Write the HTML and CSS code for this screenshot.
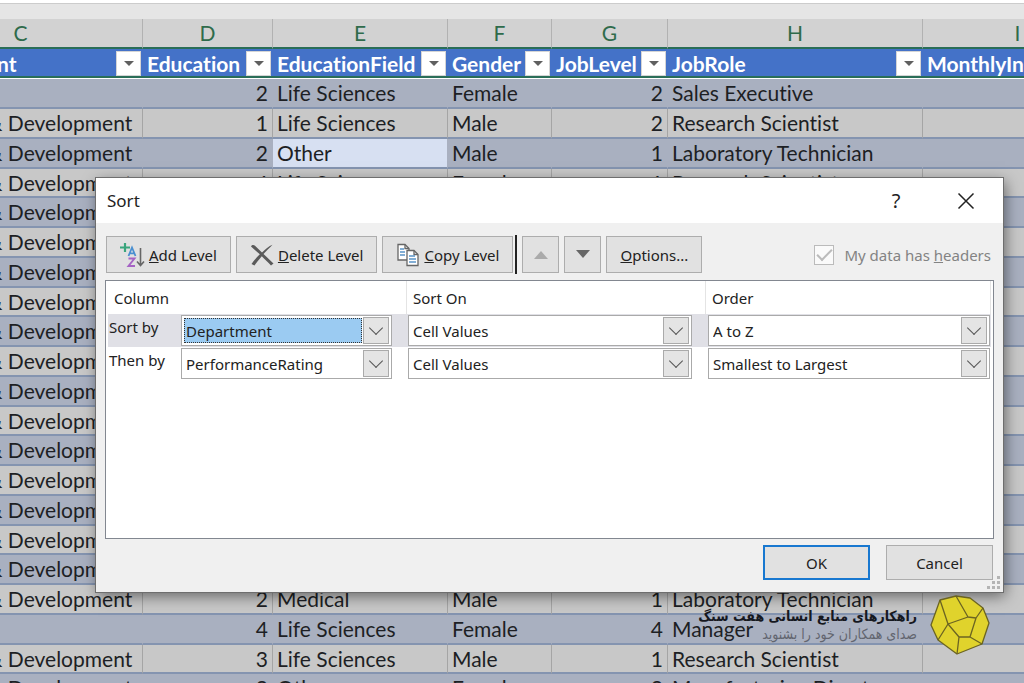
FILE: index.html
```html
<!DOCTYPE html>
<html lang="en">
<head>
<meta charset="utf-8">
<meta name="viewport" content="width=device-width, initial-scale=1">
<title>Sort</title>
<link rel="stylesheet" href="styles.css">
</head>
<body>
<main class="app">
  <div class="formula-strip"></div>
  <table class="sheet">
    <colgroup>
      <col class="col-c"><col class="col-d"><col class="col-e"><col class="col-f"><col class="col-g"><col class="col-h"><col class="col-i">
    </colgroup>
    <thead>
      <tr class="letters"><th>C</th><th>D</th><th>E</th><th>F</th><th>G</th><th>H</th><th>I</th></tr>
      <tr class="fields">
        <th><div class="field">Department<button class="filter" aria-label="Filter Department"></button></div></th>
        <th><div class="field">Education<button class="filter" aria-label="Filter Education"></button></div></th>
        <th><div class="field">EducationField<button class="filter" aria-label="Filter EducationField"></button></div></th>
        <th><div class="field">Gender<button class="filter" aria-label="Filter Gender"></button></div></th>
        <th><div class="field">JobLevel<button class="filter" aria-label="Filter JobLevel"></button></div></th>
        <th><div class="field">JobRole<button class="filter" aria-label="Filter JobRole"></button></div></th>
        <th><div class="field">MonthlyIncome<button class="filter" aria-label="Filter MonthlyIncome"></button></div></th>
      </tr>
    </thead>
    <tbody>
      <tr><td>Sales</td><td class="num">2</td><td>Life Sciences</td><td>Female</td><td class="num">2</td><td>Sales Executive</td><td></td></tr>
      <tr><td>Research &amp; Development</td><td class="num">1</td><td>Life Sciences</td><td>Male</td><td class="num">2</td><td>Research Scientist</td><td></td></tr>
      <tr><td>Research &amp; Development</td><td class="num">2</td><td class="active">Other</td><td>Male</td><td class="num">1</td><td>Laboratory Technician</td><td></td></tr>
      <tr><td>Research &amp; Development</td><td class="num">4</td><td>Life Sciences</td><td>Female</td><td class="num">1</td><td>Research Scientist</td><td></td></tr>
      <tr><td>Research &amp; Development</td><td></td><td></td><td></td><td></td><td></td><td></td></tr>
      <tr><td>Research &amp; Development</td><td></td><td></td><td></td><td></td><td></td><td></td></tr>
      <tr><td>Research &amp; Development</td><td></td><td></td><td></td><td></td><td></td><td></td></tr>
      <tr><td>Research &amp; Development</td><td></td><td></td><td></td><td></td><td></td><td></td></tr>
      <tr><td>Research &amp; Development</td><td></td><td></td><td></td><td></td><td></td><td></td></tr>
      <tr><td>Research &amp; Development</td><td></td><td></td><td></td><td></td><td></td><td></td></tr>
      <tr><td>Research &amp; Development</td><td></td><td></td><td></td><td></td><td></td><td></td></tr>
      <tr><td>Research &amp; Development</td><td></td><td></td><td></td><td></td><td></td><td></td></tr>
      <tr><td>Research &amp; Development</td><td></td><td></td><td></td><td></td><td></td><td></td></tr>
      <tr><td>Research &amp; Development</td><td></td><td></td><td></td><td></td><td></td><td></td></tr>
      <tr><td>Research &amp; Development</td><td></td><td></td><td></td><td></td><td></td><td></td></tr>
      <tr><td>Research &amp; Development</td><td></td><td></td><td></td><td></td><td></td><td></td></tr>
      <tr><td>Research &amp; Development</td><td></td><td></td><td></td><td></td><td></td><td></td></tr>
      <tr><td>Research &amp; Development</td><td class="num">2</td><td>Medical</td><td>Male</td><td class="num">1</td><td>Laboratory Technician</td><td></td></tr>
      <tr><td>Sales</td><td class="num">4</td><td>Life Sciences</td><td>Female</td><td class="num">4</td><td>Manager</td><td></td></tr>
      <tr><td>Research &amp; Development</td><td class="num">3</td><td>Life Sciences</td><td>Male</td><td class="num">1</td><td>Research Scientist</td><td></td></tr>
      <tr><td>Research &amp; Development</td><td class="num">2</td><td>Other</td><td>Female</td><td class="num">3</td><td>Manufacturing Director</td><td></td></tr>
    </tbody>
  </table>

  <section class="dialog" role="dialog" aria-labelledby="dialog-title">
    <header class="titlebar">
      <h1 class="title" id="dialog-title">Sort</h1>
      <button class="title-btn" aria-label="Help">?</button>
      <button class="title-btn" aria-label="Close"><svg width="18" height="18" viewBox="0 0 18 18" fill="none" stroke="#222" stroke-width="1.5"><path d="M1.5 1.5l15 15M16.5 1.5l-15 15"/></svg></button>
    </header>
    <div class="toolbar">
      <button class="btn">
        <svg width="25" height="26" viewBox="0 0 25 26" fill="none">
          <path d="M5 1v9M0 5.500h10" stroke="#3aa57c" stroke-width="2.2"/>
          <path d="M8.500 14l3.500-8.500 3.500 8.500M9.800 11.300h4.500" stroke="#4a8fd0" stroke-width="1.800"/>
          <path d="M8.500 16.500h6l-6 7.500h6.500" stroke="#a563c4" stroke-width="1.900"/>
          <path d="M20.500 6v17M17 19.500l3.500 4 3.500-4" stroke="#666" stroke-width="1.600"/>
        </svg><span><u>A</u>dd Level</span></button>
      <button class="btn">
        <svg width="24" height="24" viewBox="0 0 24 24"><path d="M1 3.500C2 1.500 4 1.800 5 2.800l7 6.700C15 6.500 19 3 22.500 1.800 20 4.500 16 8 13.500 11c3 2.800 7 6.500 10 9.500l-2.500 2C18 19 14.500 16 11.800 13.200 9 16.500 6.500 19.500 4.500 22.500L1.500 21c2.500-3.500 5.500-7 8.300-9.800z" fill="#5a5a5a"/></svg>
        <span><u>D</u>elete Level</span></button>
      <button class="btn">
        <svg width="24" height="24" viewBox="0 0 24 24" stroke-width="1.300">
          <path d="M2 1.500h7l4 4V17H2z" fill="#fff" stroke="#666"/><path d="M9 1.500v4h4" fill="none" stroke="#666"/>
          <path d="M4 6h4M4 9h5M4 12h5" stroke="#5a94c8"/>
          <path d="M11 7.500h7l4 4v11H11z" fill="#fff" stroke="#666"/><path d="M18 7.500v4h4" fill="none" stroke="#666"/>
          <path d="M13 13h6M13 16h7M13 19h7" stroke="#5a94c8"/>
        </svg><span><u>C</u>opy Level</span></button>
      <span class="divider"></span>
      <button class="btn move" disabled aria-label="Move up"><svg width="16" height="9" viewBox="0 0 16 9"><path d="M1 9l7-8 7 8z" fill="#aaa"/></svg></button>
      <button class="btn move" aria-label="Move down"><svg width="16" height="9" viewBox="0 0 16 9"><path d="M1 0h14L8 8z" fill="#666"/></svg></button>
      <button class="btn"><span><u>O</u>ptions...</span></button>
      <label class="headers"><input class="tick" type="checkbox" checked disabled><span>My data has <u>h</u>eaders</span></label>
    </div>
    <div class="levels">
      <div class="level heads"><span class="head">Column</span><span class="head">Sort On</span><span class="head">Order</span></div>
      <div class="level selected">
        <label class="level-name" for="col1">Sort by</label>
        <div class="combo"><select class="pick focused" id="col1"><option>Department</option></select><span class="arrow"></span></div>
        <div class="combo"><select class="pick" aria-label="Sort on, first level"><option>Cell Values</option></select><span class="arrow"></span></div>
        <div class="combo"><select class="pick" aria-label="Order, first level"><option>A to Z</option></select><span class="arrow"></span></div>
      </div>
      <div class="level">
        <label class="level-name" for="col2">Then by</label>
        <div class="combo"><select class="pick" id="col2"><option>PerformanceRating</option></select><span class="arrow"></span></div>
        <div class="combo"><select class="pick" aria-label="Sort on, second level"><option>Cell Values</option></select><span class="arrow"></span></div>
        <div class="combo"><select class="pick" aria-label="Order, second level"><option>Smallest to Largest</option></select><span class="arrow"></span></div>
      </div>
    </div>
    <footer class="actions">
      <button class="btn action default">OK</button>
      <button class="btn action">Cancel</button>
    </footer>
    <svg class="grip" width="14" height="14" viewBox="0 0 14 14" fill="#b4b4b4"><path d="M10 0h3v3h-3zM5 5h3v3H5zM10 5h3v3h-3zM0 10h3v3H0zM5 10h3v3H5zM10 10h3v3h-3z"/></svg>
  </section>

  <aside class="brand">
    <div class="brand-text" lang="fa" dir="rtl">
      <p class="brand-name">راهکارهای منابع انسانی هفت سنگ</p>
      <p class="brand-line">صدای همکاران خود را بشنوید</p>
    </div>
    <svg width="60" height="60" viewBox="0 0 60 60" fill="none" stroke="#6b6422" stroke-width="1.300" stroke-linejoin="round">
      <path d="M26 1L10 5 1 30l7 15 19 14 25-10 7-21-6-15L40 3z" fill="#e0d32c"/>
      <path d="M26 1l12 21-20 7-8-24M38 22l8 1 7-10M18 29L8 45M18 29l11 13-2 17M29 42h11l6-19M40 42l12 7"/>
    </svg>
  </aside>
</main>
</body>
</html>
```
FILE: styles.css
```css
* { box-sizing: border-box; }
body { margin: 0; font-family: "Noto Sans", "Open Sans", sans-serif; font-size: 15px; color: #222; }
button, select, input { font: inherit; color: inherit; }
.app { position: relative; height: 100vh; overflow: hidden; background: #c9c9c9; }

.formula-strip { height: 19px; border-top: 3px solid #fff; background: #e5e5e5; box-shadow: inset 0 1px #ccc; }
.sheet { width: 1214px; margin-left: -101px; table-layout: fixed; border-collapse: separate; border-spacing: 0; font-family: Lato, sans-serif; font-size: 21px; line-height: 24px; font-variant-ligatures: none; }
.col-c { width: 244px; }
.col-d { width: 130px; }
.col-e { width: 175px; }
.col-f { width: 104px; }
.col-g { width: 116px; }
.col-h { width: 255px; }
.col-i { width: 190px; }
.sheet th, .sheet td { padding: 0 4px; text-align: left; white-space: nowrap; }
.letters th { height: 30px; text-align: center; font-weight: 400; color: #2f6b4b; background: #d2d2d2; border-right: 1px solid #b2b2b2; border-bottom: 2px solid #2a6e58; }
.sheet .fields th { height: 30px; padding: 0 2px 0 4px; color: #fff; background: #4472c8; border-bottom: 1px solid #fff; box-shadow: inset 0 -2px #2a6e58; }
.field { display: flex; align-items: center; justify-content: space-between; height: 28px; }
.filter { display: grid; place-items: center; width: 25px; height: 25px; flex: none; padding: 0; border: 1px solid #d5d5d5; background: #fff; }
.filter::before { content: ""; border: 5px solid transparent; border-top-color: #606060; border-bottom: 0; }
.sheet td { height: 30px; color: #1d1f24; border-bottom: 2px solid #8494b0; border-right: 1px solid #a5a5a5; background: #c8c8c8; }
.sheet tr:nth-child(odd) td { background: #a9b0c0; border-right-color: #a9b0c0; }
.sheet tr:nth-child(4n) td { height: 29px; }
.sheet td:first-child { padding-left: 0; }
.sheet .num { text-align: right; }
.sheet tr:nth-child(odd) .active { background: #d7e0f2; }

.dialog { position: absolute; top: 178px; left: 96px; right: 21px; background: #f0f0f0; outline: 1px solid #6e6e6e; box-shadow: 2px 4px 14px rgba(0, 0, 0, .5); padding-bottom: 12px; }
.titlebar { display: flex; align-items: center; height: 45px; padding: 0 12px 0 11px; background: #fff; }
.title { flex: 1; margin: 0; font-size: 17px; font-weight: 400; }
.title-btn { display: grid; place-items: center; width: 50px; height: 40px; margin-left: 20px; padding: 0; border: 0; background: none; font-size: 20px; }
.toolbar { display: flex; align-items: center; gap: 5px; padding: 12px 12px 6px 10px; }
.btn { display: flex; align-items: center; justify-content: center; gap: 4px; height: 37px; padding: 0 13px; border: 1px solid #adadad; background: #e1e1e1; white-space: nowrap; }
.move { width: 37px; padding: 0; }
.divider { width: 2px; height: 39px; margin: 0 -3px; background: #222; }
.divider + .btn { margin-left: 3px; }
.headers { display: flex; align-items: center; gap: 10px; margin-left: auto; color: #838383; }
.tick { appearance: none; display: grid; place-items: center; width: 20px; height: 20px; margin: 0; border: 1px solid #bbb; background: #fafafa; }
.tick::before { content: ""; width: 13px; height: 6px; border: solid #bbb; border-width: 0 0 2px 2px; transform: rotate(-45deg); margin-bottom: 4px; }

.levels { height: 259px; margin: 0 9px; border: 1px solid #828790; background: #fff; padding: 0 2px; }
.level { display: grid; grid-template-columns: 57px 211px 284px 1fr; column-gap: 16px; align-items: center; height: 33px; }
.heads { grid-template-columns: 299px 299px 1fr; column-gap: 0; }
.head { height: 33px; line-height: 34px; padding-left: 6px; border-right: 1px solid #e4e4e4; }
.selected { background: #e0e0e6; }
.level-name { align-self: start; padding-left: 1px; line-height: 26px; white-space: nowrap; }
.combo { display: flex; align-items: center; height: 31px; padding: 2px; border: 1px solid #aaa; background: #fff; }
.combo:last-child { margin-right: 1px; }
.pick { appearance: none; flex: 1; min-width: 0; height: 25px; padding: 0 1px; border: 1px solid transparent; border-radius: 0; background: transparent; }
.focused { background: #9bcbf2; border: 1px dotted #333; }
.arrow { display: grid; place-items: center; width: 26px; height: 27px; margin-left: 1px; border: 1px solid #aaa; background: #e4e4e4; pointer-events: none; }
.arrow::before { content: ""; width: 9px; height: 9px; margin-bottom: 5px; border: solid #555; border-width: 0 1px 1px 0; transform: rotate(45deg); }

.actions { display: flex; justify-content: flex-end; gap: 16px; padding: 6px 10px 0 0; }
.action { width: 107px; height: 35px; }
.default { border: 2px solid #1878d0; }
.grip { position: absolute; right: 2px; bottom: 2px; }

.brand { position: absolute; top: 595px; right: 34px; display: flex; gap: 13px; }
.brand-text { padding-top: 12px; font-family: "DejaVu Sans Condensed", "DejaVu Sans", sans-serif; font-size: 14px; white-space: nowrap; }
.brand-name, .brand-line { margin: 0; line-height: 18px; }
.brand-name { font-weight: 700; color: #16181f; }
.brand-line { color: #62656f; }
```
